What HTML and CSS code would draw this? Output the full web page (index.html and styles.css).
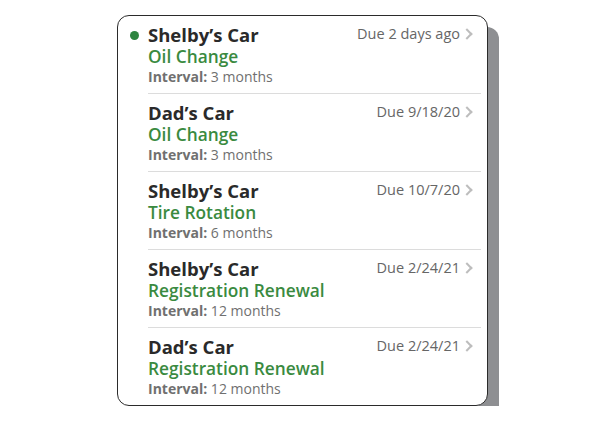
FILE: index.html
```html
<!DOCTYPE html>
<html lang="en">
  <head>
    <meta charset="UTF-8" />
    <meta name="viewport" content="width=device-width, initial-scale=1.0" />
    <title>Upcoming Maintenance</title>
    <link rel="stylesheet" href="styles.css">
  </head>
  <body>
    <div class="stage">
      <div class="card">
        <div class="item new">
          <div class="info">
            <div class="car">Shelby’s Car</div>
            <div class="task">Oil Change</div>
            <div class="interval"><b>Interval:</b> 3 months</div>
          </div>
          <div class="due">Due 2 days ago <span class="chev"></span></div>
        </div>
        <div class="item">
          <div class="info">
            <div class="car">Dad’s Car</div>
            <div class="task">Oil Change</div>
            <div class="interval"><b>Interval:</b> 3 months</div>
          </div>
          <div class="due">Due 9/18/20 <span class="chev"></span></div>
        </div>
        <div class="item">
          <div class="info">
            <div class="car">Shelby’s Car</div>
            <div class="task">Tire Rotation</div>
            <div class="interval"><b>Interval:</b> 6 months</div>
          </div>
          <div class="due">Due 10/7/20 <span class="chev"></span></div>
        </div>
        <div class="item">
          <div class="info">
            <div class="car">Shelby’s Car</div>
            <div class="task">Registration Renewal</div>
            <div class="interval"><b>Interval:</b> 12 months</div>
          </div>
          <div class="due">Due 2/24/21 <span class="chev"></span></div>
        </div>
        <div class="item">
          <div class="info">
            <div class="car">Dad’s Car</div>
            <div class="task">Registration Renewal</div>
            <div class="interval"><b>Interval:</b> 12 months</div>
          </div>
          <div class="due">Due 2/24/21 <span class="chev"></span></div>
        </div>
      </div>
    </div>
  </body>
</html>
```
FILE: styles.css
```css
body {
  font-family: "Open Sans", Arial, sans-serif;
  background-color: #fff;
  margin: 0;
  padding: 0;
}

.stage {
  padding: 15px 0 0 117px;
}

.card {
  box-sizing: border-box;
  width: 371px;
  background-color: #fff;
  border: 1px solid #2b2b2b;
  border-radius: 12px;
  box-shadow: 11px 12px 0 #8e8f92;
  padding-left: 30px;
  padding-right: 6px;
}

.item {
  display: flex;
  justify-content: space-between;
  padding: 8px 0 7px;
  border-bottom: 1px solid #dcdcdc;
  position: relative;
}

.item:last-child {
  border-bottom: none;
}

.item.new::before {
  content: "";
  position: absolute;
  left: -18px;
  top: 15px;
  width: 9px;
  height: 9px;
  border-radius: 50%;
  background-color: #2e8540;
}

.car {
  font-size: 18.5px;
  line-height: 22px;
  font-weight: 700;
  color: #2a2a2a;
}

.task {
  font-size: 17.3px;
  line-height: 22px;
  font-weight: 600;
  color: #3a8a3f;
}

.interval {
  font-size: 14px;
  line-height: 18px;
  color: #707070;
}

.interval b {
  font-weight: 700;
}

.due {
  font-size: 14.5px;
  line-height: 20px;
  color: #666;
  display: flex;
  align-items: center;
  gap: 3px;
  align-self: flex-start;
  margin-right: 10px;
}

.chev {
  width: 6px;
  height: 6px;
  border-top: 2px solid #bdbdbd;
  border-right: 2px solid #bdbdbd;
  transform: rotate(45deg);
}
```
